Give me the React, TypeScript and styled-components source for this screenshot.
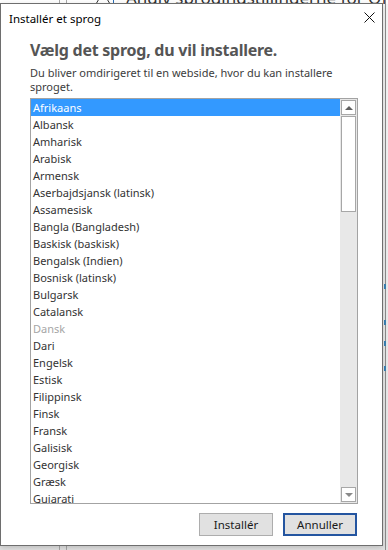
import React from "react";
import styled, { createGlobalStyle } from "styled-components";

const Global = createGlobalStyle`
  html, body { margin: 0; padding: 0; }
  body {
    width: 388px;
    height: 550px;
    overflow: hidden;
    background: #ececec;
    font-family: "Noto Sans", "Segoe UI", sans-serif;
  }
`;

const Screen = styled.div`
  position: relative;
  width: 388px;
  height: 550px;
  overflow: hidden;
  background: linear-gradient(#f7f7f7, #e4e4e4);
`;

const BackTop = styled.div`
  position: absolute;
  left: 0;
  top: 0;
  right: 0;
  height: 4px;
  background: #ffffff;
  overflow: hidden;
`;

const BackText = styled.div`
  position: absolute;
  left: 126px;
  top: -14px;
  font-size: 17px;
  color: #333;
  white-space: nowrap;
`;

const BackLine = styled.div<{ $x: number; $color?: string }>`
  position: absolute;
  top: 0;
  bottom: 0;
  left: ${(p) => p.$x}px;
  width: 1px;
  background: ${(p) => p.$color ?? "#a9a9a9"};
`;

const BackBlue = styled.div`
  position: absolute;
  left: 113px;
  top: 0;
  width: 1px;
  height: 4px;
  background: #2a6fb8;
`;

const BackIcon = styled.svg`
  position: absolute;
  left: 95px;
  top: -9px;
`;

const RightMark = styled.div<{ $y: number }>`
  position: absolute;
  left: 384px;
  top: ${(p) => p.$y}px;
  width: 2px;
  height: 5px;
  background: #3b82b5;
`;

const Dialog = styled.div`
  position: absolute;
  left: 0;
  top: 3px;
  width: 383px;
  height: 543px;
  box-sizing: border-box;
  border: 1px solid #6e6e6e;
  background: #ffffff;
  display: flex;
  flex-direction: column;
  box-shadow: 0 2px 6px rgba(0, 0, 0, 0.18);
`;

const TitleBar = styled.div`
  height: 30px;
  display: flex;
  justify-content: space-between;
  align-items: flex-start;
  padding-left: 8px;
`;

const TitleText = styled.div`
  font-size: 11.5px;
  line-height: 16px;
  margin-top: 7px;
  color: #000;
`;

const CloseIcon = styled.svg`
  margin-top: 8px;
  margin-right: 7px;
`;

const Body = styled.div`
  flex: 1;
  display: flex;
  flex-direction: column;
  padding: 0 25px 0 29px;
`;

const Heading = styled.div`
  margin-top: 6px;
  font-size: 16px;
  line-height: 20px;
  font-weight: 700;
  color: #555555;
  letter-spacing: -0.25px;
`;

const SubText = styled.div`
  margin-top: 6px;
  font-size: 11px;
  line-height: 14px;
  color: #3c3c3c;
  width: 327px;
`;

const ListBox = styled.div`
  margin-top: 4px;
  width: 328px;
  height: 406px;
  box-sizing: border-box;
  border: 1px solid #a3a3a3;
  display: flex;
  background: #fff;
`;

const Items = styled.div`
  flex: 1;
  overflow: hidden;
`;

const Item = styled.div<{ $selected?: boolean; $disabled?: boolean }>`
  height: 17px;
  line-height: 17px;
  padding-left: 2px;
  font-size: 11px;
  white-space: nowrap;
  background: ${(p) => (p.$selected ? "#3399ff" : "transparent")};
  color: ${(p) => (p.$selected ? "#ffffff" : p.$disabled ? "#a6a6a6" : "#333333")};
`;

const ScrollBar = styled.div`
  width: 17px;
  display: flex;
  flex-direction: column;
  align-items: center;
  background: #e8e8e8;
  padding: 1px 0;
  box-sizing: border-box;
`;

const ScrollButton = styled.div`
  width: 15px;
  height: 15px;
  box-sizing: border-box;
  border: 1px solid #a7a7a7;
  background: #fff;
  display: flex;
  align-items: center;
  justify-content: center;
`;

const ArrowUp = styled.div`
  width: 0;
  height: 0;
  border-left: 4px solid transparent;
  border-right: 4px solid transparent;
  border-bottom: 4px solid #606060;
`;

const ArrowDown = styled.div`
  width: 0;
  height: 0;
  border-left: 4px solid transparent;
  border-right: 4px solid transparent;
  border-top: 4px solid #8a8a8a;
`;

const Thumb = styled.div`
  margin-top: 1px;
  width: 15px;
  height: 96px;
  box-sizing: border-box;
  border: 1px solid #a7a7a7;
  background: #fff;
`;

const Track = styled.div`
  flex: 1;
`;

const Footer = styled.div`
  margin-top: 9px;
  display: flex;
  justify-content: flex-end;
  gap: 10px;
`;

const Button = styled.button<{ $primary?: boolean }>`
  width: 74px;
  height: 23px;
  box-sizing: border-box;
  font-family: "Noto Sans", "Segoe UI", sans-serif;
  font-size: 11.5px;
  color: #1a1a1a;
  background: #e1e1e1;
  border: ${(p) => (p.$primary ? "2px solid #2455a0" : "1px solid #adadad")};
  padding: 0;
`;

const languages = [
  "Afrikaans",
  "Albansk",
  "Amharisk",
  "Arabisk",
  "Armensk",
  "Aserbajdsjansk (latinsk)",
  "Assamesisk",
  "Bangla (Bangladesh)",
  "Baskisk (baskisk)",
  "Bengalsk (Indien)",
  "Bosnisk (latinsk)",
  "Bulgarsk",
  "Catalansk",
  "Dansk",
  "Dari",
  "Engelsk",
  "Estisk",
  "Filippinsk",
  "Finsk",
  "Fransk",
  "Galisisk",
  "Georgisk",
  "Græsk",
  "Gujarati",
  "Hausa",
];

export default function App() {
  return (
    <>
      <Global />
      <Screen>
        <BackTop>
          <BackIcon width="16" height="14" viewBox="0 0 16 14">
            <path d="M8 1 L15 13 H1 Z" fill="none" stroke="#333" strokeWidth="1" />
          </BackIcon>
          <BackBlue />
          <BackText>Angiv sprogindstillingerne for Office</BackText>
        </BackTop>
        <BackLine $x={59} />
        <BackLine $x={66} />
        <BackLine $x={385} $color="#8c8c8c" />
        <RightMark $y={284} />
        <RightMark $y={320} />
        <RightMark $y={341} />
        <RightMark $y={366} />
        <Dialog>
          <TitleBar>
            <TitleText>Installér et sprog</TitleText>
            <CloseIcon width="11" height="11" viewBox="0 0 11 11">
              <path d="M0.5 0.5 L10.5 10.5 M10.5 0.5 L0.5 10.5" stroke="#111" strokeWidth="1" />
            </CloseIcon>
          </TitleBar>
          <Body>
            <Heading>Vælg det sprog, du vil installere.</Heading>
            <SubText>
              Du bliver omdirigeret til en webside, hvor du kan installere sproget.
            </SubText>
            <ListBox>
              <Items>
                {languages.map((l, i) => (
                  <Item key={l} $selected={i === 0} $disabled={l === "Dansk"}>
                    {l}
                  </Item>
                ))}
              </Items>
              <ScrollBar>
                <ScrollButton>
                  <ArrowUp />
                </ScrollButton>
                <Thumb />
                <Track />
                <ScrollButton>
                  <ArrowDown />
                </ScrollButton>
              </ScrollBar>
            </ListBox>
            <Footer>
              <Button>Installér</Button>
              <Button $primary>Annuller</Button>
            </Footer>
          </Body>
        </Dialog>
      </Screen>
    </>
  );
}
